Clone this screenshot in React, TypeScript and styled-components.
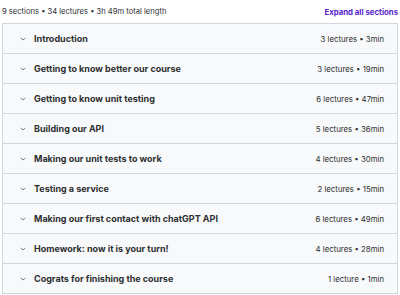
import styled, { createGlobalStyle } from "styled-components";

const sections = [
  { title: "Introduction", lectures: 3, length: "3min" },
  { title: "Getting to know better our course", lectures: 3, length: "19min" },
  { title: "Getting to know unit testing", lectures: 6, length: "47min" },
  { title: "Building our API", lectures: 5, length: "36min" },
  { title: "Making our unit tests to work", lectures: 4, length: "30min" },
  { title: "Testing a service", lectures: 2, length: "15min" },
  { title: "Making our first contact with chatGPT API", lectures: 6, length: "49min" },
  { title: "Homework: now it is your turn!", lectures: 4, length: "28min" },
  { title: "Cograts for finishing the course", lectures: 1, length: "1min" },
];

const GlobalStyle = createGlobalStyle`
  body {
    margin: 0;
    background: #ffffff;
    font-family: Inter, "Noto Sans", sans-serif;
    color: #2d2f31;
  }
`;

const Chevron = () => (
  <svg width="8" height="8" viewBox="0 0 8 8" fill="none">
    <path d="M2 3.2 L4 5 L6 3.2" stroke="#6a6f73" strokeWidth="0.9" strokeLinecap="round" strokeLinejoin="round" />
  </svg>
);

const App = () => {
  return (
    <>
      <GlobalStyle />
      <Page>
        <Header>
          <Summary>9 sections • 34 lectures • 3h 49m total length</Summary>
          <ExpandAll>Expand all sections</ExpandAll>
        </Header>
        <List>
          {sections.map((s) => (
            <Row key={s.title}>
              <Left>
                <Chevron />
                <Title>{s.title}</Title>
              </Left>
              <Meta>
                {s.lectures} {s.lectures === 1 ? "lecture" : "lectures"} • {s.length}
              </Meta>
            </Row>
          ))}
        </List>
      </Page>
    </>
  );
};

export default App;

const Page = styled.div`
  width: 396px;
  padding: 0 2px;
`;
const Header = styled.div`
  display: flex;
  justify-content: space-between;
  align-items: center;
  height: 23px;
`;
const Summary = styled.div`
  font-size: 7.6px;
  color: #2d2f31;
`;
const ExpandAll = styled.div`
  font-size: 7.8px;
  font-weight: 700;
  color: #5624d0;
`;
const List = styled.div`
  border: 1px solid #d1d7dc;
  border-bottom: none;
`;
const Row = styled.div`
  display: flex;
  justify-content: space-between;
  align-items: center;
  height: 29px;
  padding: 0 13px 0 16px;
  background: #f7f9fa;
  border-bottom: 1px solid #d1d7dc;
`;
const Left = styled.div`
  display: flex;
  align-items: center;
  gap: 7px;
`;
const Title = styled.div`
  font-size: 9px;
  font-weight: 700;
  color: #2d2f31;
`;
const Meta = styled.div`
  font-size: 7.8px;
  color: #2d2f31;
`;
